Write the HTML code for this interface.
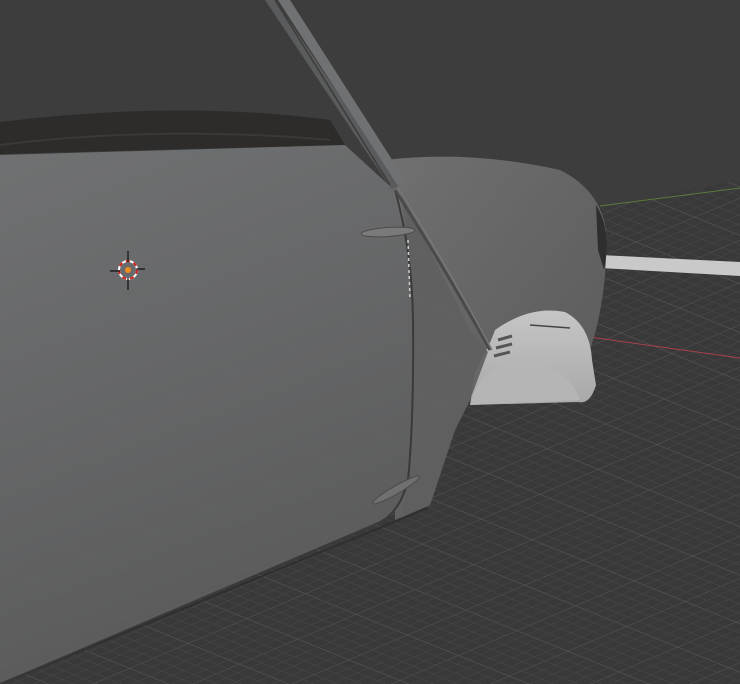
<!DOCTYPE html>
<html><head><style>html,body{margin:0;padding:0;background:#3d3d3d;overflow:hidden}svg{display:block}</style></head>
<body>
<svg width="740" height="684" viewBox="0 0 740 684" xmlns="http://www.w3.org/2000/svg">
<defs>
<pattern id="g" width="50" height="50" patternUnits="userSpaceOnUse" patternTransform="translate(300,300) rotate(22) skewX(-45) scale(1.1,0.9)">
<path d="M0 0H50M0 0V50" stroke="#565656" stroke-width="1.3" fill="none"/>
<path d="M0 10H50M0 20H50M0 30H50M0 40H50M10 0V50M20 0V50M30 0V50M40 0V50" stroke="#464646" stroke-width="0.7" fill="none"/>
</pattern>
<pattern id="g2" width="50" height="50" patternUnits="userSpaceOnUse" patternTransform="translate(300,300) rotate(22) skewX(-45) scale(1.1,0.9)">
<path d="M0 0H50M0 0V50" stroke="#7a7a7a" stroke-width="1" fill="none"/>
</pattern>
<linearGradient id="door" x1="0" y1="0" x2="0.3" y2="1">
<stop offset="0" stop-color="#707172"/><stop offset="0.5" stop-color="#656667"/><stop offset="1" stop-color="#5a5a5a"/></linearGradient>
<linearGradient id="fend" x1="0" y1="0" x2="0.8" y2="1">
<stop offset="0" stop-color="#707070"/><stop offset="0.6" stop-color="#626262"/><stop offset="1" stop-color="#5a5a5a"/></linearGradient>
<linearGradient id="wh" x1="0" y1="0" x2="0" y2="1">
<stop offset="0" stop-color="#c6c6c6"/><stop offset="1" stop-color="#a8a8a8"/></linearGradient>
</defs>
<rect width="740" height="684" fill="#3d3d3d"/>
<path d="M0 330 L740 180 L740 684 L0 684Z" fill="#393939"/>
<path d="M0 330 L740 180 L740 684 L0 684Z" fill="url(#g)"/>
<line x1="600" y1="206" x2="740" y2="188" stroke="#5c7a3a" stroke-width="1"/>
<line x1="410" y1="312" x2="740" y2="358" stroke="#a8424a" stroke-width="1"/>
<path d="M600 255 L740 262 L740 276 L600 268Z" fill="#c9c9c9"/>
<path d="M385 160 Q470 150 560 170 Q600 190 606 230 Q608 280 596 330 L590 350 Q570 315 540 312 Q500 318 488 352 L470 400 L455 430 L430 505 L395 520 L395 200Z" fill="url(#fend)"/>
<path d="M596 205 Q612 230 604 270 L598 250Z" fill="#2e2e2e"/>
<path d="M495 330 Q530 305 565 312 Q590 325 592 360 L596 385 Q590 405 578 402 L470 405 L475 372 Q490 345 495 330Z" fill="url(#wh)"/>
<path d="M470 405 Q480 365 520 362 Q565 362 580 400Z" fill="#b5b5b5"/>
<path d="M498 340 L512 336 M496 348 L512 344 M494 356 L510 352" stroke="#555" stroke-width="3"/>
<path d="M530 325 L570 328" stroke="#444" stroke-width="1.5"/>
<path d="M0 122 Q180 100 330 120 L345 145 L0 154Z" fill="#2d2c2b"/>
<path d="M0 145 Q160 125 330 140" stroke="#3a3938" stroke-width="2" fill="none"/>
<path d="M0 155 L345 145 L392 188 Q410 240 413 300 Q416 400 410 480 Q400 515 380 522 L0 684Z" fill="url(#door)"/>
<path d="M400 190 Q430 250 470 330 L488 352 L470 400 L455 430 L430 505 L400 518 Q412 480 414 400 Q414 280 400 190Z" fill="#5f5f5f" opacity="0.9"/>
<path d="M0 155 L345 145 L392 188 Q410 240 413 300 Q416 400 410 480 Q400 515 380 522 L0 684Z M400 190 L488 352 L430 505 L400 518Z" fill="url(#g2)" opacity="0.12"/>
<path d="M428 508 L0 684" stroke="#2f2f2f" stroke-width="2"/>
<path d="M380 522 L0 684" stroke="#3b3b3b" stroke-width="1.5"/>
<path d="M395 190 Q412 250 413 320 Q414 420 408 480 Q400 512 380 522" stroke="#3a3a3a" stroke-width="2" fill="none"/>
<path d="M408 240 L410 300" stroke="#d0d0d0" stroke-width="1.5" stroke-dasharray="3 3"/>
<path d="M265 0 L275 0 L400 185 L392 190Z" fill="#5a5b5c"/>
<path d="M278 0 L290 0 L405 180 L398 186Z" fill="#707172"/>
<path d="M275 0 L390 185" stroke="#3c3c3c" stroke-width="1.5"/>
<path d="M395 190 Q440 260 490 350" stroke="#4a4a4a" stroke-width="3" fill="none"/>
<path d="M398 188 Q445 262 492 350" stroke="#777" stroke-width="1.5" fill="none"/>
<ellipse cx="388" cy="232" rx="27" ry="4.5" fill="#7a7a7a" stroke="#4a4a4a" stroke-width="1" transform="rotate(-4 388 232)"/>
<ellipse cx="396" cy="490" rx="27" ry="4" fill="#707070" stroke="#4a4a4a" stroke-width="1" transform="rotate(-30 396 490)"/>
<circle cx="128" cy="270" r="9" fill="none" stroke="#fff" stroke-width="2"/>
<circle cx="128" cy="270" r="9" fill="none" stroke="#d02020" stroke-width="2" stroke-dasharray="4 4"/>
<path d="M128 251 V262 M128 278 V290 M110 271 H120 M136 269 H145" stroke="#111" stroke-width="1.2"/>
<circle cx="128" cy="270" r="3" fill="#f08c1c"/>
</svg>
</body></html>
